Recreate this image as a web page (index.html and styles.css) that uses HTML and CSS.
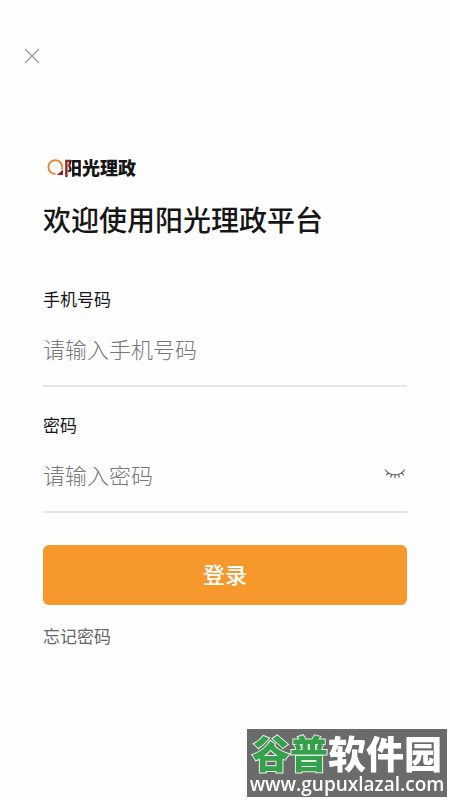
FILE: index.html
```html
<!DOCTYPE html>
<html lang="zh-CN">
<head>
<meta charset="utf-8">
<meta name="viewport" content="width=device-width, initial-scale=1">
<title>登录</title>
<link rel="stylesheet" href="styles.css">
</head>
<body>
<header class="topbar">
  <button class="icon-button" type="button" aria-label="关闭">
    <svg class="close-icon" viewBox="0 0 16 16" aria-hidden="true"><path d="M1 1L15 15M15 1L1 15"/></svg>
  </button>
</header>
<main class="login">
  <div class="brand">
    <svg class="brand-mark" viewBox="0 0 17 18" aria-hidden="true">
      <path class="brand-ring" d="M8.5 16A6.9 6.9 0 1 1 14.8 11.4"/>
      <path class="brand-corner" d="M16 11.4v5.6H9.8z"/>
    </svg>
    <span class="brand-name"><span class="brand-first">阳</span>光理政</span>
  </div>
  <h1 class="title">欢迎使用阳光理政平台</h1>
  <form class="form">
    <div class="field">
      <label class="label" for="phone">手机号码</label>
      <div class="control"><input class="input" id="phone" type="tel" placeholder="请输入手机号码"></div>
    </div>
    <div class="field">
      <label class="label" for="password">密码</label>
      <div class="control">
        <input class="input" id="password" type="password" placeholder="请输入密码">
        <button class="icon-button" type="button" aria-label="显示密码">
          <svg class="eye-icon" viewBox="0 0 22 12" aria-hidden="true"><path d="M1 1.5C6 8.5 16 8.5 21 1.5M4 4.5L2.4 7.4M7.6 6.3L6.6 9.5M11 6.8V10.2M14.4 6.3L15.4 9.5M18 4.5L19.6 7.4"/></svg>
        </button>
      </div>
    </div>
    <button class="submit" type="submit">登录</button>
  </form>
  <a class="forgot" href="#">忘记密码</a>
</main>
<aside class="watermark">
  <div class="watermark-name"><span class="watermark-green">谷普</span>软件园</div>
  <div class="watermark-url">www.gupuxlazal.com</div>
</aside>
</body>
</html>
```
FILE: styles.css
```css
* { box-sizing: border-box; }

body {
  margin: 0;
  min-height: 100vh;
  background: #fefefe;
  color: #161616;
  font-family: "Noto Sans CJK SC", sans-serif;
}

button, input { font: inherit; }

.topbar { padding: 44px 20px 0; }

.icon-button {
  display: grid;
  place-items: center;
  width: 24px;
  height: 24px;
  padding: 0;
  border: 0;
  background: none;
}

.close-icon {
  width: 16px;
  height: 16px;
  fill: none;
  stroke: #999;
  stroke-width: 1.2;
}

.login { padding: 87px 43px 0; }

.brand {
  display: flex;
  align-items: center;
  height: 24px;
  padding-left: 4px;
}

.brand-mark { width: 17px; height: 18px; }
.brand-ring { fill: none; stroke: #e4842b; stroke-width: 1.9; }
.brand-corner { fill: #8e2620; }

.brand-name {
  font-size: 18px;
  font-weight: 900;
  line-height: 24px;
}

.brand-first {
  background: linear-gradient(90deg, #8e2620 35%, #161616 35%);
  background-clip: text;
  -webkit-background-clip: text;
  color: transparent;
}

.title {
  margin: 20px 0 0;
  font-size: 28px;
  font-weight: 500;
  line-height: 40px;
}

.form { margin-top: 48px; }

.field {
  height: 100px;
  margin-bottom: 26px;
  border-bottom: 2px solid #e6e6e6;
}

.label {
  display: block;
  font-size: 17px;
  line-height: 24px;
}

.control {
  display: flex;
  align-items: center;
  height: 74px;
}

.input {
  flex: 1;
  min-width: 0;
  height: 40px;
  padding: 0;
  border: 0;
  outline: 0;
  background: none;
  font-size: 22px;
  font-weight: 300;
}

.input::placeholder { color: #777; opacity: 1; }

.eye-icon {
  width: 22px;
  height: 12px;
  fill: none;
  stroke: #666;
  stroke-width: 1.2;
}

.submit {
  display: block;
  width: 100%;
  height: 60px;
  margin-top: 32px;
  padding: 0 0 4px;
  border: 0;
  border-radius: 6px;
  background: #f7982d;
  color: #fff;
  font-size: 22px;
  font-weight: 500;
}

.forgot {
  display: inline-block;
  margin-top: 19px;
  color: #666;
  font-size: 17px;
  line-height: 24px;
  text-decoration: none;
}

.watermark {
  position: fixed;
  right: 3px;
  bottom: 3px;
  width: 200px;
  height: 68px;
  padding-top: 2px;
  background: #6b6b6b;
  color: #fff;
  text-align: center;
  white-space: nowrap;
}

.watermark-name {
  font-size: 38px;
  font-weight: 900;
  line-height: 42px;
}

.watermark-green {
  color: #35a04c;
  -webkit-text-stroke: 2px #e4efe4;
  paint-order: stroke fill;
}

.watermark-url {
  font-family: "Open Sans", sans-serif;
  font-size: 19px;
  font-weight: 600;
  line-height: 22px;
}
```
